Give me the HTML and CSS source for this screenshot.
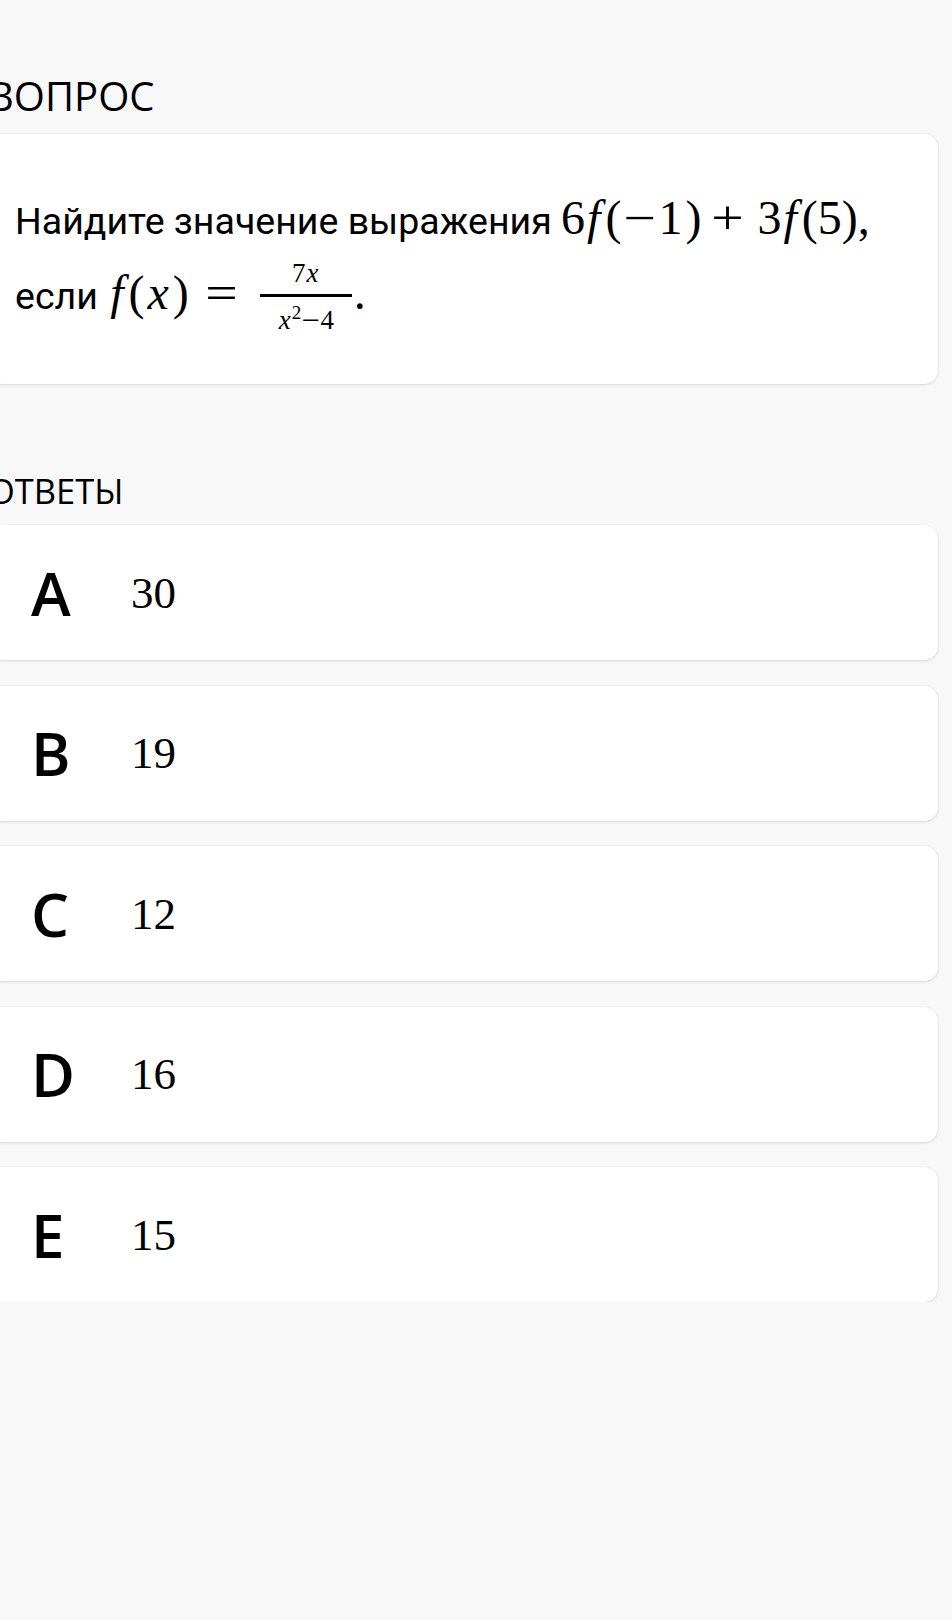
FILE: index.html
```html
<!DOCTYPE html>
<html lang="ru">
<head>
<meta charset="utf-8">
<title>Вопрос</title>
<link rel="stylesheet" href="styles.css">
</head>
<body>
<main class="page">
  <h2 class="section-title title-question">ВОПРОС</h2>
  <section class="card question">
    <p class="question-text">Найдите значение выражения <span class="math"><span class="mn">6</span><span class="mi f">f</span><span class="mp">(</span><span class="mo neg">−</span><span class="mn">1</span><span class="mp close">)</span><span class="mo bin">+</span><span class="mn">3</span><span class="mi f">f</span><span class="mp">(</span><span class="mn">5</span><span class="mp">)</span><span class="comma">,</span></span><br>если <span class="math"><span class="mi f f2">f</span><span class="mp">(</span><span class="mi x">x</span><span class="mp">)</span><span class="mo rel">=</span><span class="frac"><span class="num"><span class="mn">7</span><span class="mi xs">x</span></span><span class="bar"></span><span class="den"><span class="mi xs">x</span><sup class="sup">2</sup><span class="mo minus-s">−</span><span class="mn">4</span></span></span><span class="dot">.</span></span></p>
  </section>

  <h2 class="section-title title-answers">ОТВЕТЫ</h2>
  <ul class="answers">
    <li class="card answer"><span class="letter">A</span><span class="value">30</span></li>
    <li class="card answer"><span class="letter">B</span><span class="value">19</span></li>
    <li class="card answer"><span class="letter">C</span><span class="value">12</span></li>
    <li class="card answer"><span class="letter">D</span><span class="value">16</span></li>
    <li class="card answer"><span class="letter">E</span><span class="value">15</span></li>
  </ul>
</main>
</body>
</html>
```

FILE: styles.css
```css
html, body {
  margin: 0;
  padding: 0;
  background: #f8f8f8;
}

body {
  color: #000;
  font-family: "Open Sans", "Noto Sans", sans-serif;
}

.page {
  margin-left: -12px;
  width: 950px;
  padding-top: 68px;
}

.section-title {
  margin: 0;
  font-family: "Open Sans", "Noto Sans", sans-serif;
  font-weight: 400;
  color: #000;
  line-height: normal;
}

.title-question {
  font-size: 40px;
  margin-bottom: 11px;
}

.title-answers {
  font-size: 34.5px;
  margin-top: 83px;
  margin-bottom: 11px;
}

.card {
  background: #fff;
  border-radius: 14px;
  box-shadow: 0 1px 3px rgba(0, 0, 0, 0.13), 0 0 1px rgba(0, 0, 0, 0.08);
}

.question {
  height: 250px;
  box-sizing: border-box;
  padding: 50px 27px 0 27px;
}

.question-text {
  margin: 0;
  font-family: Roboto, "Liberation Sans", sans-serif;
  font-size: 37.5px;
  line-height: 75px;
}

/* math */
.math {
  font-family: "Liberation Serif", "Times New Roman", serif;
  font-size: 48px;
  line-height: 40px;
  white-space: nowrap;
}

.mi {
  font-style: italic;
}

.mi.f {
  margin: 0 5px 0 2px;
}

.mi.f2 {
  margin-left: 3px;
}

.mi.x {
  margin: 0 4px 0 3px;
}

.mp.close {
  margin-left: 3px;
}

.mo {
  display: inline-block;
  transform: scaleX(1.2);
}

.mo.neg {
  margin: 0 5px;
}

.mo.bin {
  margin: 0 16px 0 13px;
}

.mo.rel {
  margin: 0 25px 0 19px;
}

.frac {
  display: inline-flex;
  flex-direction: column;
  align-items: center;
  vertical-align: 27px;
  margin: -10px 0 -10px 0;
  font-size: 27px;
  line-height: 27px;
}

.num, .den {
  display: block;
  white-space: nowrap;
}

.num {
  margin-bottom: 7px;
}

.den {
  margin-top: 10px;
}

.mi.xs {
  margin: 0 1px;
}

.bar {
  display: block;
  width: 92px;
  height: 2.5px;
  background: #000;
}

.sup {
  font-size: 19px;
  vertical-align: 10px;
  line-height: 0;
}

.mo.minus-s {
  margin: 0 2px;
}

.dot {
  margin-left: 2px;
}

/* answers */
.answers {
  list-style: none;
  margin: 0;
  padding: 0;
  display: flex;
  flex-direction: column;
  gap: 25.5px;
}

.answer {
  height: 135px;
  display: flex;
  align-items: center;
  padding-left: 43px;
}

.letter {
  width: 100px;
  font-family: "Open Sans", "Noto Sans", sans-serif;
  font-size: 60px;
  font-weight: 600;
  line-height: normal;
}

.value {
  font-family: "Liberation Serif", "Times New Roman", serif;
  font-size: 45px;
  line-height: normal;
}
```
